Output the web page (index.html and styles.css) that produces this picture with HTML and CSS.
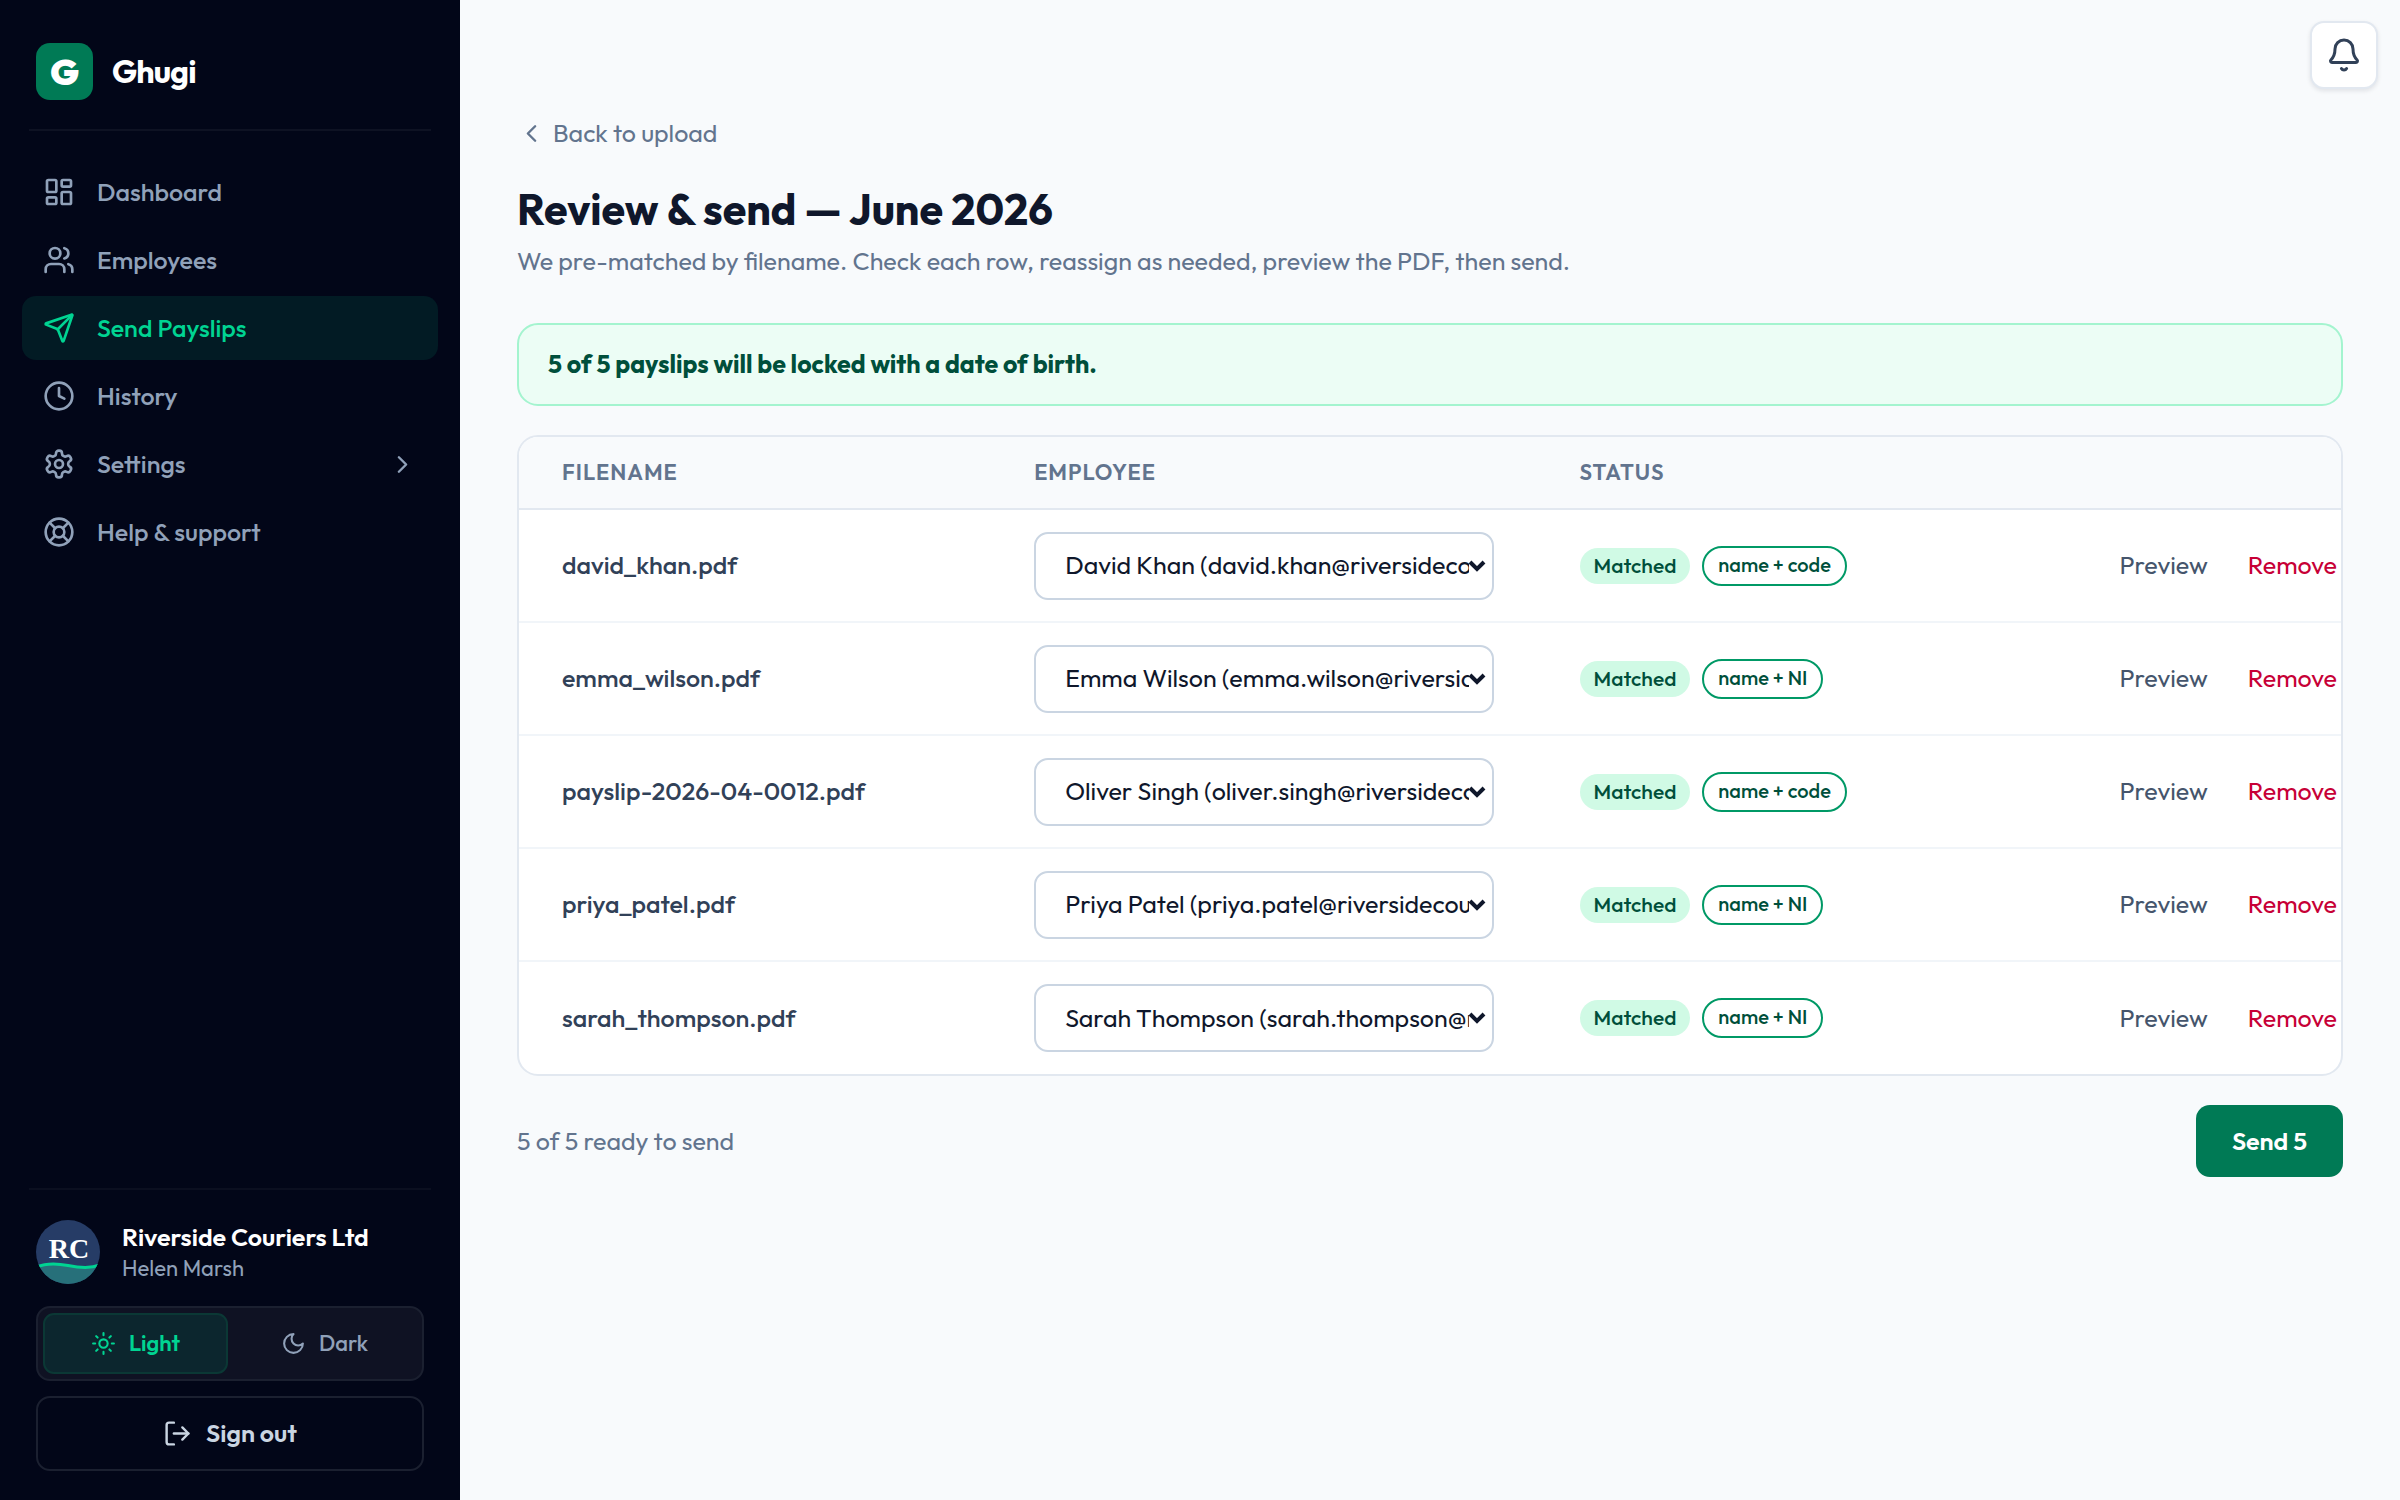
FILE: index.html
```html
<!DOCTYPE html>
<html lang="en">
<head>
<meta charset="utf-8">
<meta name="viewport" content="width=device-width, initial-scale=1">
<title>Review &amp; send — Ghugi</title>
<link rel="stylesheet" href="styles.css">
</head>
<body>
<div class="app">
  <aside class="sidebar">
    <div class="brand">
      <span class="brand-mark">G</span>
      <span class="brand-name">Ghugi</span>
    </div>
    <nav class="nav" aria-label="Main">
      <a class="nav-item" href="#dashboard">
        <svg class="icon" viewBox="0 0 24 24"><rect x="3" y="3" width="7" height="9" rx="1"/><rect x="14" y="3" width="7" height="5" rx="1"/><rect x="14" y="12" width="7" height="9" rx="1"/><rect x="3" y="16" width="7" height="5" rx="1"/></svg>
        <span>Dashboard</span>
      </a>
      <a class="nav-item" href="#employees">
        <svg class="icon" viewBox="0 0 24 24"><path d="M16 21v-2a4 4 0 0 0-4-4H6a4 4 0 0 0-4 4v2"/><circle cx="9" cy="7" r="4"/><path d="M22 21v-2a4 4 0 0 0-3-3.87"/><path d="M16 3.13a4 4 0 0 1 0 7.75"/></svg>
        <span>Employees</span>
      </a>
      <a class="nav-item is-active" href="#send" aria-current="page">
        <svg class="icon" viewBox="0 0 24 24"><path d="M14.536 21.686a.5.5 0 0 0 .937-.024l6.5-19a.496.496 0 0 0-.635-.635l-19 6.5a.5.5 0 0 0-.024.937l7.93 3.18a2 2 0 0 1 1.112 1.11z"/><path d="m21.854 2.147-10.94 10.939"/></svg>
        <span>Send Payslips</span>
      </a>
      <a class="nav-item" href="#history">
        <svg class="icon" viewBox="0 0 24 24"><circle cx="12" cy="12" r="10"/><path d="M12 6v6l4 2"/></svg>
        <span>History</span>
      </a>
      <a class="nav-item" href="#settings">
        <svg class="icon" viewBox="0 0 24 24"><path d="M12.22 2h-.44a2 2 0 0 0-2 2v.18a2 2 0 0 1-1 1.73l-.43.25a2 2 0 0 1-2 0l-.15-.08a2 2 0 0 0-2.73.73l-.22.38a2 2 0 0 0 .73 2.73l.15.1a2 2 0 0 1 1 1.72v.51a2 2 0 0 1-1 1.74l-.15.09a2 2 0 0 0-.73 2.73l.22.38a2 2 0 0 0 2.73.73l.15-.08a2 2 0 0 1 2 0l.43.25a2 2 0 0 1 1 1.73V20a2 2 0 0 0 2 2h.44a2 2 0 0 0 2-2v-.18a2 2 0 0 1 1-1.73l.43-.25a2 2 0 0 1 2 0l.15.08a2 2 0 0 0 2.73-.73l.22-.39a2 2 0 0 0-.73-2.73l-.15-.08a2 2 0 0 1-1-1.74v-.5a2 2 0 0 1 1-1.74l.15-.09a2 2 0 0 0 .73-2.73l-.22-.38a2 2 0 0 0-2.73-.73l-.15.08a2 2 0 0 1-2 0l-.43-.25a2 2 0 0 1-1-1.73V4a2 2 0 0 0-2-2z"/><circle cx="12" cy="12" r="3"/></svg>
        <span>Settings</span>
        <svg class="icon icon-chevron" viewBox="0 0 24 24"><path d="m9 18 6-6-6-6"/></svg>
      </a>
      <a class="nav-item" href="#help">
        <svg class="icon" viewBox="0 0 24 24"><circle cx="12" cy="12" r="10"/><path d="m4.93 4.93 4.24 4.24"/><path d="m14.83 9.17 4.24-4.24"/><path d="m14.83 14.83 4.24 4.24"/><path d="m9.17 14.83-4.24 4.24"/><circle cx="12" cy="12" r="4"/></svg>
        <span>Help &amp; support</span>
      </a>
    </nav>
    <div class="account">
      <div class="profile">
        <svg class="avatar" viewBox="0 0 64 64" role="img" aria-label="Riverside Couriers logo">
          <defs><clipPath id="disc"><circle cx="32" cy="32" r="32"/></clipPath></defs>
          <g clip-path="url(#disc)">
            <rect width="64" height="64" fill="#263c66"/>
            <path d="M0 47C10 43 20 43 32 45.500S54 49 64 45V64H0Z" fill="#27707a"/>
            <path d="M0 47C10 43 20 43 32 45.500S54 49 64 45" fill="none" stroke="#00d492" stroke-width="3"/>
          </g>
          <text class="avatar-text" x="33" y="38" text-anchor="middle">RC</text>
        </svg>
        <div class="profile-text">
          <span class="profile-company">Riverside Couriers Ltd</span>
          <span class="profile-user">Helen Marsh</span>
        </div>
      </div>
      <div class="theme" role="group" aria-label="Theme">
        <button class="theme-option is-active" type="button" aria-pressed="true">
          <svg class="icon icon-small" viewBox="0 0 24 24"><circle cx="12" cy="12" r="4"/><path d="M12 2v2M12 20v2M4.93 4.93l1.41 1.41M17.66 17.66l1.41 1.41M2 12h2M20 12h2M6.34 17.66l-1.41 1.41M19.07 4.93l-1.41 1.41"/></svg>
          Light
        </button>
        <button class="theme-option" type="button" aria-pressed="false">
          <svg class="icon icon-small" viewBox="0 0 24 24"><path d="M12 3a6 6 0 0 0 9 9 9 9 0 1 1-9-9Z"/></svg>
          Dark
        </button>
      </div>
      <button class="sign-out" type="button">
        <svg class="icon icon-exit" viewBox="0 0 24 24"><path d="M9 21H5a2 2 0 0 1-2-2V5a2 2 0 0 1 2-2h4"/><path d="m16 17 5-5-5-5"/><path d="M21 12H9"/></svg>
        Sign out
      </button>
    </div>
  </aside>

  <main class="main">
    <button class="bell" type="button" aria-label="Notifications">
      <svg class="icon icon-bell" viewBox="0 0 24 24"><path d="M10.268 21a2 2 0 0 0 3.464 0"/><path d="M3.262 15.326A1 1 0 0 0 4 17h16a1 1 0 0 0 .74-1.673C19.41 13.956 18 12.499 18 8A6 6 0 0 0 6 8c0 4.499-1.411 5.956-2.738 7.326"/></svg>
    </button>
    <a class="back" href="#upload">
      <svg class="icon icon-back" viewBox="0 0 24 24"><path d="m15 18-6-6 6-6"/></svg>
      Back to upload
    </a>
    <h1 class="title">Review &amp; send — June 2026</h1>
    <p class="subtitle">We pre-matched by filename. Check each row, reassign as needed, preview the PDF, then send.</p>
    <p class="notice" role="status">5 of 5 payslips will be locked with a date of birth.</p>

    <div class="card">
      <table class="payslips">
        <colgroup><col class="col-file"><col class="col-employee"><col class="col-status"><col></colgroup>
        <thead>
          <tr><th scope="col">Filename</th><th scope="col">Employee</th><th scope="col">Status</th><th aria-label="Actions"></th></tr>
        </thead>
        <tbody>
          <tr>
            <td class="file">david_khan.pdf</td>
            <td><div class="select"><select aria-label="Employee for david_khan.pdf"><option>David Khan (david.khan@riversidecouriers.co.uk)</option></select><svg class="select-arrow" viewBox="0 0 18 12"><path d="m2 2 7 7 7-7"/></svg></div></td>
            <td><div class="badges"><span class="badge">Matched</span><span class="badge badge-outline">name + code</span></div></td>
            <td><div class="actions"><button type="button">Preview</button><button class="danger" type="button">Remove</button></div></td>
          </tr>
          <tr>
            <td class="file">emma_wilson.pdf</td>
            <td><div class="select"><select aria-label="Employee for emma_wilson.pdf"><option>Emma Wilson (emma.wilson@riversidecouriers.co.uk)</option></select><svg class="select-arrow" viewBox="0 0 18 12"><path d="m2 2 7 7 7-7"/></svg></div></td>
            <td><div class="badges"><span class="badge">Matched</span><span class="badge badge-outline">name + NI</span></div></td>
            <td><div class="actions"><button type="button">Preview</button><button class="danger" type="button">Remove</button></div></td>
          </tr>
          <tr>
            <td class="file">payslip-2026-04-0012.pdf</td>
            <td><div class="select"><select aria-label="Employee for payslip-2026-04-0012.pdf"><option>Oliver Singh (oliver.singh@riversidecouriers.co.uk)</option></select><svg class="select-arrow" viewBox="0 0 18 12"><path d="m2 2 7 7 7-7"/></svg></div></td>
            <td><div class="badges"><span class="badge">Matched</span><span class="badge badge-outline">name + code</span></div></td>
            <td><div class="actions"><button type="button">Preview</button><button class="danger" type="button">Remove</button></div></td>
          </tr>
          <tr>
            <td class="file">priya_patel.pdf</td>
            <td><div class="select"><select aria-label="Employee for priya_patel.pdf"><option>Priya Patel (priya.patel@riversidecouriers.co.uk)</option></select><svg class="select-arrow" viewBox="0 0 18 12"><path d="m2 2 7 7 7-7"/></svg></div></td>
            <td><div class="badges"><span class="badge">Matched</span><span class="badge badge-outline">name + NI</span></div></td>
            <td><div class="actions"><button type="button">Preview</button><button class="danger" type="button">Remove</button></div></td>
          </tr>
          <tr>
            <td class="file">sarah_thompson.pdf</td>
            <td><div class="select"><select aria-label="Employee for sarah_thompson.pdf"><option>Sarah Thompson (sarah.thompson@riversidecouriers.co.uk)</option></select><svg class="select-arrow" viewBox="0 0 18 12"><path d="m2 2 7 7 7-7"/></svg></div></td>
            <td><div class="badges"><span class="badge">Matched</span><span class="badge badge-outline">name + NI</span></div></td>
            <td><div class="actions"><button type="button">Preview</button><button class="danger" type="button">Remove</button></div></td>
          </tr>
        </tbody>
      </table>
    </div>

    <div class="footer">
      <span>5 of 5 ready to send</span>
      <button class="send" type="button">Send 5</button>
    </div>
  </main>
</div>
</body>
</html>
```
FILE: styles.css
```css
*, *::before, *::after { box-sizing: border-box; }

body {
  margin: 0;
  background: #f8fafc;
  color: #0f172b;
  font-family: Outfit, Lato, sans-serif;
  font-size: 25px;
  line-height: 35px;
}

button, select { font: inherit; color: inherit; }
button { cursor: pointer; }
a { color: inherit; text-decoration: none; }

.icon {
  flex: none;
  width: 32px;
  height: 32px;
  fill: none;
  stroke: currentColor;
  stroke-width: 2;
  stroke-linecap: round;
  stroke-linejoin: round;
}

.app { display: flex; min-height: 100vh; }

/* Sidebar */
.sidebar {
  display: flex;
  flex-direction: column;
  flex: none;
  width: 460px;
  background: #020618;
  color: #90a1b9;
  font-weight: 500;
}

.brand {
  display: flex;
  align-items: center;
  gap: 19px;
  height: 131px;
  margin: 0 29px;
  padding: 14px 7px 0;
  border-bottom: 2px solid #0e1223;
  color: #fff;
}

.brand-mark {
  display: grid;
  place-items: center;
  width: 57px;
  height: 57px;
  border-radius: 14px;
  background: #007a55;
  font-size: 36px;
  font-weight: 900;
}

.brand-name { font-size: 32px; font-weight: 700; letter-spacing: -0.025em; }

.nav {
  display: flex;
  flex-direction: column;
  gap: 4px;
  padding: 29px 22px;
}

.nav-item {
  display: flex;
  align-items: center;
  gap: 22px;
  height: 64px;
  padding: 0 21px;
  border-radius: 14px;
}

.nav-item.is-active { background: #021b24; color: #00d492; }
.icon-chevron { width: 29px; height: 29px; margin-left: auto; }

.account {
  display: flex;
  flex-direction: column;
  margin: auto 29px 0;
  padding: 29px 7px;
  border-top: 2px solid #0b0f20;
}

.profile { display: flex; align-items: center; gap: 22px; margin-bottom: 22px; }
.avatar { flex: none; width: 64px; height: 64px; }
.avatar-text { font: 700 28px "Liberation Serif", serif; fill: #fff; }
.profile-text { display: flex; flex-direction: column; padding-top: 3px; line-height: 31px; }
.profile-company { color: #fff; font-weight: 600; }
.profile-user { font-size: 22px; font-weight: 400; }

.theme {
  display: grid;
  grid-template-columns: 1fr 1fr;
  gap: 4px;
  height: 75px;
  margin-bottom: 15px;
  padding: 5px;
  border: 2px solid #1b2030;
  border-radius: 14px;
  background: #0f1223;
}

.theme-option {
  display: flex;
  align-items: center;
  justify-content: center;
  gap: 13px;
  border: 2px solid transparent;
  border-radius: 11px;
  background: none;
  font-size: 22px;
  font-weight: 500;
}

.theme-option.is-active {
  border-color: #0b3835;
  background: #0c262e;
  color: #00d492;
  font-weight: 600;
}

.icon-small { width: 25px; height: 25px; }

.sign-out {
  display: flex;
  align-items: center;
  justify-content: center;
  gap: 14px;
  height: 75px;
  border: 2px solid #1b2030;
  border-radius: 14px;
  background: none;
  color: #cad5e2;
  font-weight: 600;
}

.icon-exit { width: 29px; height: 29px; }

/* Page */
.main { position: relative; flex: 1; min-width: 0; padding: 116px 57px 57px; }

.bell {
  position: absolute;
  top: 21px;
  right: 22px;
  display: grid;
  place-items: center;
  width: 68px;
  height: 68px;
  padding: 0;
  border: 2px solid #e2e8f0;
  border-radius: 14px;
  background: #fff;
  color: #314158;
  box-shadow: 0 2px 4px #0f172b1a;
}

.icon-bell { width: 36px; height: 36px; }

.back {
  display: flex;
  align-items: center;
  gap: 7px;
  width: fit-content;
  color: #62748e;
}

.icon-back { width: 29px; height: 29px; }

.title { margin: 31px 0 0; font-size: 43px; line-height: 54px; font-weight: 700; }
.subtitle { margin: 8px 0 0; color: #62748e; }

.notice {
  margin: 44px 0 0;
  padding: 22px 29px;
  border: 2px solid #a4f4cf;
  border-radius: 21px;
  background: #ecfdf5;
  color: #004f3b;
  font-weight: 700;
}

.card {
  margin-top: 29px;
  overflow: hidden;
  border: 2px solid #e2e8f0;
  border-radius: 21px;
  background: #fff;
}

.payslips {
  width: calc(100% + 59px);
  table-layout: fixed;
  border-collapse: separate;
  border-spacing: 0;
}

.col-file { width: 25.1%; }
.col-employee { width: 29%; }
.col-status { width: 19.8%; }

.payslips th {
  height: 73px;
  padding: 0 43px;
  border-bottom: 2px solid #e2e8f0;
  background: #f8fafc;
  color: #62748e;
  font-size: 22px;
  font-weight: 600;
  letter-spacing: 1px;
  text-align: left;
  text-transform: uppercase;
}

.payslips td { height: 113px; padding: 0 43px; border-bottom: 2px solid #f1f5f9; white-space: nowrap; }
.payslips tbody tr:last-child td { height: 112px; border-bottom: 0; }
.payslips .file { color: #314158; font-weight: 500; }

.select { position: relative; }

.select select {
  display: block;
  width: 100%;
  height: 68px;
  padding: 0 23px 0 29px;
  border: 2px solid #cad5e2;
  border-radius: 14px;
  background: #fff;
  appearance: none;
  text-overflow: clip;
}

.select-arrow {
  position: absolute;
  top: 28px;
  right: 8px;
  width: 18px;
  height: 12px;
  fill: none;
  stroke: #0f172b;
  stroke-width: 4;
  pointer-events: none;
}

.badges { display: flex; align-items: center; gap: 12px; }

.badge {
  padding: 0 14px 2px;
  border-radius: 20px;
  background: #d0fae5;
  color: #004f3b;
  font-size: 21px;
  line-height: 34px;
  font-weight: 500;
}

.badge-outline {
  border: 2px solid #009966;
  background: #fff;
  font-size: 20px;
}

.actions { display: flex; justify-content: flex-end; color: #45556c; }
.actions button { padding: 0 20px; border: 0; background: none; }
.actions .danger { color: #c70036; }

.footer {
  display: flex;
  align-items: center;
  justify-content: space-between;
  margin-top: 29px;
  color: #62748e;
}

.send {
  height: 72px;
  padding: 0 36px;
  border: 0;
  border-radius: 14px;
  background: #007a55;
  color: #fff;
  font-weight: 600;
}
```
